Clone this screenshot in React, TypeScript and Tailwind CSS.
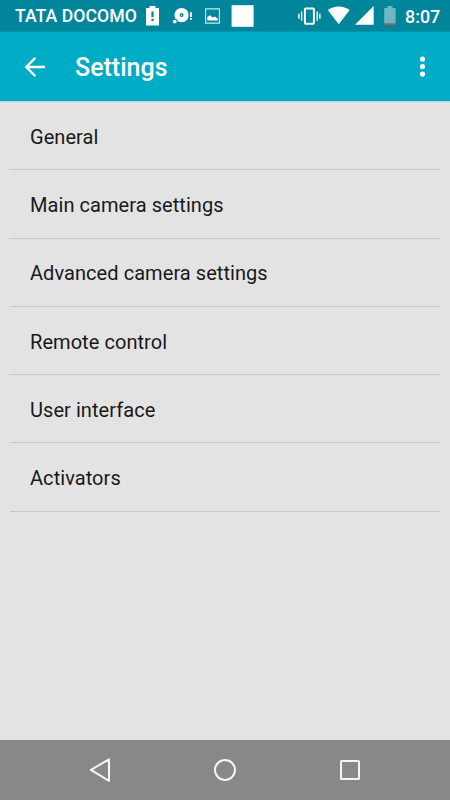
const items = [
  'General',
  'Main camera settings',
  'Advanced camera settings',
  'Remote control',
  'User interface',
  'Activators',
];

function NotificationIcons() {
  return (
    <svg width="114" height="31" viewBox="142 0 114 31" fill="#fff">
      <path d="M146 8h3.5V6h6v2h3.5v17.4h-13z" />
      <path d="M151.4 11.5h2.2v5.5h-2.2zM151.4 18.8h2.2V21h-2.2z" fill="#00859a" />
      <path d="M181.6 7.9a7.2 7.2 0 1 0 0 14.4a7.2 7.2 0 1 0 0-14.4zm0 5.2a2 2 0 1 1 0 4a2 2 0 1 1 0-4z" fillRule="evenodd" />
      <circle cx="181.6" cy="15.1" r=".7" />
      <circle cx="174.8" cy="21.6" r="2.8" fill="#00859a" />
      <circle cx="174.8" cy="21.6" r="1.9" />
      <path d="M188.7 9h4v12h-4z" fill="#00859a" />
      <path d="M190 12.2h1.8v4.7H190zM190 18h1.8v1.8H190z" />
      <path d="M205.6 8.9h13.8v14.2h-13.8z" fill="none" stroke="#cde7eb" strokeWidth="1.1" />
      <path d="M207.3 20.6v-3.6l2.6-1.8 2.9 2.4 2-1 3 2.2v1.8z" />
      <path d="M231.6 5.2h22v21.6h-22z" />
    </svg>
  );
}

function SystemIcons() {
  return (
    <svg width="100" height="31" viewBox="297 0 100 31" fill="#fff">
      <rect x="304.9" y="8.4" width="9" height="15.4" rx=".7" fill="none" stroke="#fff" strokeWidth="2" />
      <path d="M301.6 11.5v9.2M298.9 13.7v5M317.2 11.5v9.2M319.9 13.7v5" fill="none" stroke="#fff" strokeWidth="1.4" />
      <path d="M338.7 24.3L327.8 10.1C334 5.3 343.4 5.3 349.7 10.1z" />
      <path d="M355 24.8L373.7 6v18.8z" />
      <path d="M384.2 8h3.2V6h5v2h3.2v15h-11.4z" fill="#6bb8c4" />
      <path d="M384.2 23h11.4v1.6h-11.4z" fill="#bd6656" />
    </svg>
  );
}

export default function App() {
  return (
    <div className="flex h-[800px] w-[450px] flex-col overflow-hidden bg-[#e3e3e3] font-[Roboto,sans-serif]">
      <div className="flex h-[31px] shrink-0 items-center bg-[#00859a] font-medium leading-[31px] text-white">
        <span className="ml-[15px] w-[127px] whitespace-nowrap pt-[2px] text-[17.7px]">TATA DOCOMO</span>
        <NotificationIcons />
        <div className="ml-[41px]"><SystemIcons /></div>
        <span className="ml-[8px] pt-[2px] text-[17.9px]">8:07</span>
      </div>
      <header className="flex h-[70px] shrink-0 items-center border-t border-[#0094a9] bg-[#00acc5] text-white">
        <svg className="ml-[24px]" width="22" height="22" viewBox="0 0 22 22" fill="none" stroke="currentColor" strokeWidth="2.3">
          <path d="M21 11H3M11.3 1.9L2.2 11l9.1 9.1" />
        </svg>
        <h1 className="ml-[29px] flex-1 pt-[3px] text-[25px] font-medium leading-[30px]">Settings</h1>
        <svg className="mr-[24px]" width="7" height="22" viewBox="0 0 7 22" fill="currentColor">
          <circle cx="3.5" cy="3.1" r="2.6" />
          <circle cx="3.5" cy="10.6" r="2.6" />
          <circle cx="3.5" cy="18.1" r="2.6" />
        </svg>
      </header>
      <main className="flex-1 border-t border-[#b5d7dc] px-[10px]">
        {items.map((item) => (
          <div key={item} className="flex h-[68.3px] items-center border-b border-[#c9c9c9] pl-[20px] pt-[2px] text-[20px] tracking-[0.06px] text-[#191919]">
            {item}
          </div>
        ))}
      </main>
      <nav className="flex h-[60px] shrink-0 items-center justify-between bg-[#888] pl-[89px] pr-[89px] text-[#f5f5f5]">
        <svg width="22" height="26" viewBox="0 0 22 26" fill="none" stroke="currentColor" strokeWidth="2" strokeLinejoin="round">
          <path d="M20 2.3v21.6L1.9 12.9z" />
        </svg>
        <svg width="24" height="24" viewBox="0 0 24 24" fill="none" stroke="currentColor" strokeWidth="2">
          <circle cx="12" cy="12" r="10" />
        </svg>
        <svg width="22" height="22" viewBox="0 0 22 22" fill="none" stroke="currentColor" strokeWidth="2">
          <rect x="2" y="2" width="18" height="18" rx=".6" />
        </svg>
      </nav>
    </div>
  );
}
